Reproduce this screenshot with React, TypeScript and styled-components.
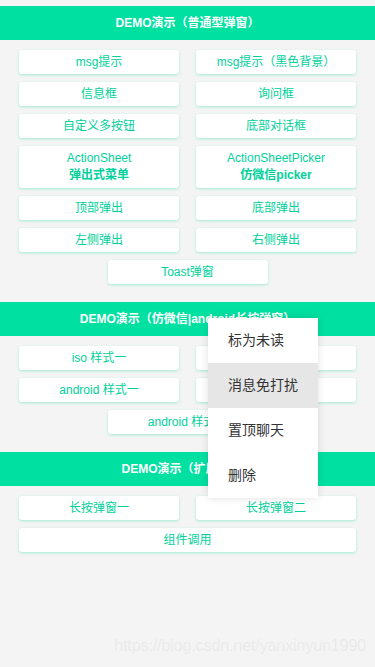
import React from "react";
import styled, { createGlobalStyle } from "styled-components";

const GlobalStyle = createGlobalStyle`
  html, body {
    margin: 0;
    padding: 0;
    background: #f4f4f4;
    font-family: "Liberation Sans", "Noto Sans CJK SC", sans-serif;
  }
`;

const Page = styled.div`
  position: relative;
  min-height: 667px;
  padding-top: 6px;
  box-sizing: border-box;
  background: #f4f4f4;
`;

const Section = styled.section`
  margin-bottom: 8px;
`;

const Header = styled.h2`
  margin: 0;
  height: 34px;
  line-height: 34px;
  background: #00e0a1;
  color: #fff;
  font-size: 12px;
  font-weight: bold;
  text-align: center;
`;

const Grid = styled.div`
  display: grid;
  grid-template-columns: 1fr 1fr;
  column-gap: 17px;
  row-gap: 8px;
  padding: 10px 19px;
`;

const Btn = styled.button<{ $span?: "center" | "full" }>`
  display: flex;
  flex-direction: column;
  align-items: center;
  justify-content: center;
  min-height: 24px;
  padding: 0;
  border: none;
  border-radius: 3px;
  background: #fff;
  box-shadow: 0 1px 3px rgba(0, 224, 161, 0.35);
  color: #00d19a;
  font-family: inherit;
  font-size: 12px;
  line-height: 24px;
  ${(p) => p.$span && "grid-column: 1 / -1;"}
  ${(p) => p.$span === "center" && "justify-self: center; width: 160px;"}
`;

const TwoLine = styled.span<{ $bold?: boolean }>`
  display: block;
  line-height: 17px;
  font-weight: ${(p) => (p.$bold ? "bold" : "normal")};
`;

const TallBtn = styled(Btn)`
  min-height: 42px;
  padding: 4px 0;
  box-sizing: border-box;
`;

const Menu = styled.ul`
  position: absolute;
  left: 208px;
  top: 318px;
  width: 110px;
  margin: 0;
  padding: 0;
  list-style: none;
  background: #fff;
  box-shadow: 0 0 8px rgba(0, 0, 0, 0.12);
  border-radius: 2px;
`;

const MenuItem = styled.li<{ $active?: boolean }>`
  height: 45px;
  line-height: 45px;
  padding-left: 20px;
  font-size: 14px;
  color: #333;
  background: ${(p) => (p.$active ? "#e6e6e6" : "#fff")};
`;

const Watermark = styled.div`
  position: absolute;
  right: 9px;
  top: 637px;
  font-size: 16px;
  letter-spacing: -0.1px;
  color: #e9e9e9;
  text-shadow: 0 0 1px rgba(255, 255, 255, 0.7);
`;

export default function App() {
  return (
    <>
      <GlobalStyle />
      <Page>
        <Section>
          <Header>DEMO演示（普通型弹窗）</Header>
          <Grid>
            <Btn>msg提示</Btn>
            <Btn>msg提示（黑色背景）</Btn>
            <Btn>信息框</Btn>
            <Btn>询问框</Btn>
            <Btn>自定义多按钮</Btn>
            <Btn>底部对话框</Btn>
            <TallBtn>
              <TwoLine>ActionSheet</TwoLine>
              <TwoLine $bold>弹出式菜单</TwoLine>
            </TallBtn>
            <TallBtn>
              <TwoLine>ActionSheetPicker</TwoLine>
              <TwoLine $bold>仿微信picker</TwoLine>
            </TallBtn>
            <Btn>顶部弹出</Btn>
            <Btn>底部弹出</Btn>
            <Btn>左侧弹出</Btn>
            <Btn>右侧弹出</Btn>
            <Btn $span="center">Toast弹窗</Btn>
          </Grid>
        </Section>

        <Section>
          <Header>DEMO演示（仿微信|android长按弹窗）</Header>
          <Grid>
            <Btn>iso 样式一</Btn>
            <Btn>iso 样式二</Btn>
            <Btn>android 样式一</Btn>
            <Btn>android 样式二</Btn>
            <Btn $span="center">android 样式三</Btn>
          </Grid>
        </Section>

        <Section>
          <Header>DEMO演示（扩展弹窗）</Header>
          <Grid>
            <Btn>长按弹窗一</Btn>
            <Btn>长按弹窗二</Btn>
            <Btn $span="full">组件调用</Btn>
          </Grid>
        </Section>

        <Menu>
          <MenuItem>标为未读</MenuItem>
          <MenuItem $active>消息免打扰</MenuItem>
          <MenuItem>置顶聊天</MenuItem>
          <MenuItem>删除</MenuItem>
        </Menu>

        <Watermark>https://blog.csdn.net/yanxinyun1990</Watermark>
      </Page>
    </>
  );
}
